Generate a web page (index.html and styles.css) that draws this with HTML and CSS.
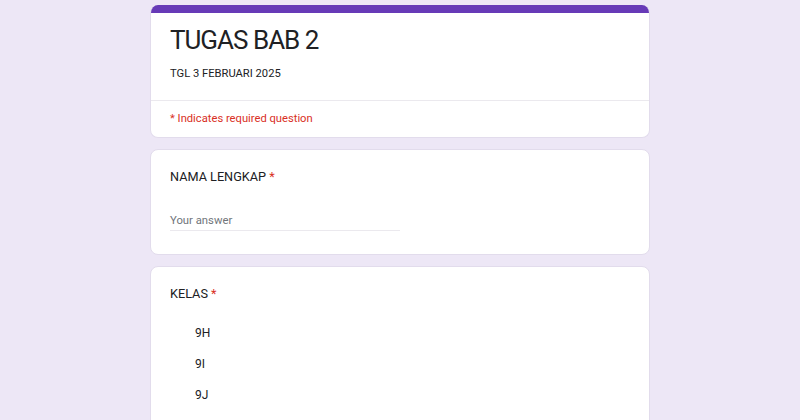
FILE: index.html
```html
<!DOCTYPE html>
<html lang="en">
<head>
    <meta charset="UTF-8">
    <meta name="viewport" content="width=device-width, initial-scale=1.0">
    <title>TUGAS BAB 2</title>
    <link rel="stylesheet" href="styles.css">
</head>
<body>
    <div class="form-container">
        <div class="card header-card">
            <div class="header-bar"></div>
            <div class="header-main">
                <h1 class="form-title">TUGAS BAB 2</h1>
                <div class="form-desc">TGL 3 FEBRUARI 2025</div>
            </div>
            <div class="required-note">* Indicates required question</div>
        </div>

        <div class="card question-card">
            <div class="question-title">NAMA LENGKAP <span class="req">*</span></div>
            <div class="answer-input">Your answer</div>
        </div>

        <div class="card question-card">
            <div class="question-title">KELAS <span class="req">*</span></div>
            <div class="options">
                <div class="option">9H</div>
                <div class="option">9I</div>
                <div class="option">9J</div>
            </div>
        </div>
    </div>
</body>
</html>
```

FILE: styles.css
```css
* {
    margin: 0;
    padding: 0;
    box-sizing: border-box;
    font-family: Roboto, Arial, sans-serif;
}

body {
    background-color: #ede7f6;
    color: #202124;
}

.form-container {
    width: 500px;
    margin: 5px auto 0;
    display: flex;
    flex-direction: column;
    gap: 11px;
}

.card {
    background-color: white;
    border: 1px solid #e2dcec;
    border-radius: 8px;
    overflow: hidden;
}

.header-card {
    border-top: none;
}

.header-bar {
    height: 8px;
    background-color: #673ab7;
}

.header-main {
    padding: 11px 19px 18px;
    border-bottom: 1px solid #ebe9ee;
}

.form-title {
    font-size: 26px;
    font-weight: 400;
    line-height: 32px;
    letter-spacing: -1px;
}

.form-desc {
    margin-top: 10px;
    font-size: 11.2px;
    line-height: 16px;
}

.required-note {
    padding: 10px 19px;
    font-size: 11.2px;
    line-height: 16px;
    color: #d93025;
}

.question-card {
    padding: 19px 19px 23px;
}

.question-title {
    font-size: 12.7px;
    line-height: 16px;
}

.req {
    color: #d93025;
}

.answer-input {
    margin-top: 27px;
    width: 230px;
    padding-bottom: 1px;
    border-bottom: 1px solid #ebe9ee;
    font-size: 11.3px;
    line-height: 17px;
    color: #70757a;
}

.options {
    margin-top: 16px;
}

.option {
    padding-left: 25px;
    font-size: 12px;
    line-height: 31px;
}
```
